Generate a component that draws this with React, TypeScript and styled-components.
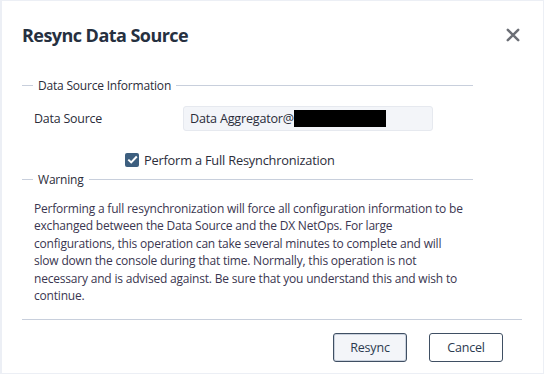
import React from "react";
import styled, { createGlobalStyle } from "styled-components";

const GlobalStyle = createGlobalStyle`
  html, body {
    margin: 0;
    padding: 0;
    background: #eceff5;
  }
  body {
    font-family: "Open Sans", "Noto Sans", sans-serif;
    font-size: 12px;
    letter-spacing: -0.2px;
  }
`;

const Dialog = styled.div`
  box-sizing: border-box;
  width: 541px;
  height: 372px;
  margin: 1px 0 0 2px;
  background: #fff;
  display: flex;
  flex-direction: column;
  padding: 0 0 0 20px;
`;

const Header = styled.div`
  display: flex;
  align-items: center;
  justify-content: space-between;
  height: 68px;
  padding-right: 23px;
`;

const Title = styled.h1`
  margin: 0;
  font-size: 18px;
  letter-spacing: -0.55px;
  font-weight: 700;
  color: #26303f;
`;

const Close = styled.button`
  border: none;
  background: none;
  padding: 0;
  width: 14px;
  height: 14px;
  display: flex;
  cursor: pointer;
`;

const Fieldset = styled.fieldset<{ $top: number }>`
  box-sizing: border-box;
  margin: ${(p) => p.$top}px 0 0;
  padding: 0 0 0 12px;
  border: none;
  border-top: 1px solid #c8cfdc;
  width: 451px;
  min-width: 0;
`;

const Legend = styled.legend`
  padding: 0 5px;
  margin-left: -1px;
  line-height: 17px;
  color: #2b2d3a;
`;

const Row = styled.div`
  display: flex;
  align-items: center;
  margin-top: 12px;
`;

const Label = styled.div`
  width: 149px;
  font-size: 12.4px;
  color: #2b2d3a;
`;

const Field = styled.div`
  box-sizing: border-box;
  width: 250px;
  height: 25px;
  background: #f3f5f9;
  border: 1px solid #e6e9ef;
  border-radius: 3px;
  display: flex;
  align-items: center;
  padding-left: 6px;
  font-size: 12.6px;
  color: #2b2d3a;
`;

const Redact = styled.span`
  display: inline-block;
  width: 92px;
  height: 17px;
  background: #000;
`;

const CheckRow = styled.label`
  display: flex;
  align-items: center;
  gap: 5px;
  height: 17px;
  margin: 20px 0 0 91px;
  font-size: 12.8px;
  color: #2b2d3a;
`;

const Box = styled.span`
  width: 14px;
  height: 14px;
  border-radius: 2px;
  background: #3d5f7f;
  display: flex;
  align-items: center;
  justify-content: center;
`;

const Text = styled.p`
  margin: 12px 0 0;
  padding-right: 8px;
  line-height: 17.4px;
  color: #3a3650;
`;

const Divider = styled.hr`
  border: none;
  border-top: 1px solid #c8cfdc;
  margin: 15px 0 0;
  width: 500px;
`;

const Footer = styled.div`
  display: flex;
  justify-content: flex-end;
  gap: 22px;
  margin-top: 13px;
  padding-right: 40px;
`;

const Button = styled.button<{ $primary?: boolean }>`
  box-sizing: border-box;
  width: 74px;
  height: 29px;
  border: 1px solid #3f4f63;
  border-radius: 3px;
  background: ${(p) => (p.$primary ? "#f3f5f9" : "#fff")};
  box-shadow: ${(p) => (p.$primary ? "inset 0 0 0 1px #c9d1dd" : "none")};
  font-family: inherit;
  font-size: 12.5px;
  letter-spacing: -0.2px;
  color: #2b3a4f;
  cursor: pointer;
`;

export default function App() {
  return (
    <>
      <GlobalStyle />
      <Dialog>
        <Header>
          <Title>Resync Data Source</Title>
          <Close aria-label="Close">
            <svg width="14" height="14" viewBox="0 0 14 14">
              <path
                d="M1.8 1.8 L12.2 12.2 M12.2 1.8 L1.8 12.2"
                stroke="#6c6f76"
                strokeWidth="2.5"
                strokeLinecap="round"
              />
            </svg>
          </Close>
        </Header>
        <Fieldset $top={8}>
          <Legend>Data Source Information</Legend>
          <Row>
            <Label>Data Source</Label>
            <Field>
              Data Aggregator@
              <Redact />
            </Field>
          </Row>
          <CheckRow>
            <Box>
              <svg width="11" height="9" viewBox="0 0 11 9">
                <path
                  d="M1.3 4.6 L4.2 7.4 L9.8 1.5"
                  stroke="#fff"
                  strokeWidth="2"
                  fill="none"
                />
              </svg>
            </Box>
            Perform a Full Resynchronization
          </CheckRow>
        </Fieldset>
        <Fieldset $top={3}>
          <Legend>Warning</Legend>
          <Text>
            Performing a full resynchronization will force all configuration
            information to be exchanged between the Data Source and the DX
            NetOps. For large configurations, this operation can take several
            minutes to complete and will slow down the console during that
            time. Normally, this operation is not necessary and is advised
            against. Be sure that you understand this and wish to continue.
          </Text>
        </Fieldset>
        <Divider />
        <Footer>
          <Button $primary>Resync</Button>
          <Button>Cancel</Button>
        </Footer>
      </Dialog>
    </>
  );
}
